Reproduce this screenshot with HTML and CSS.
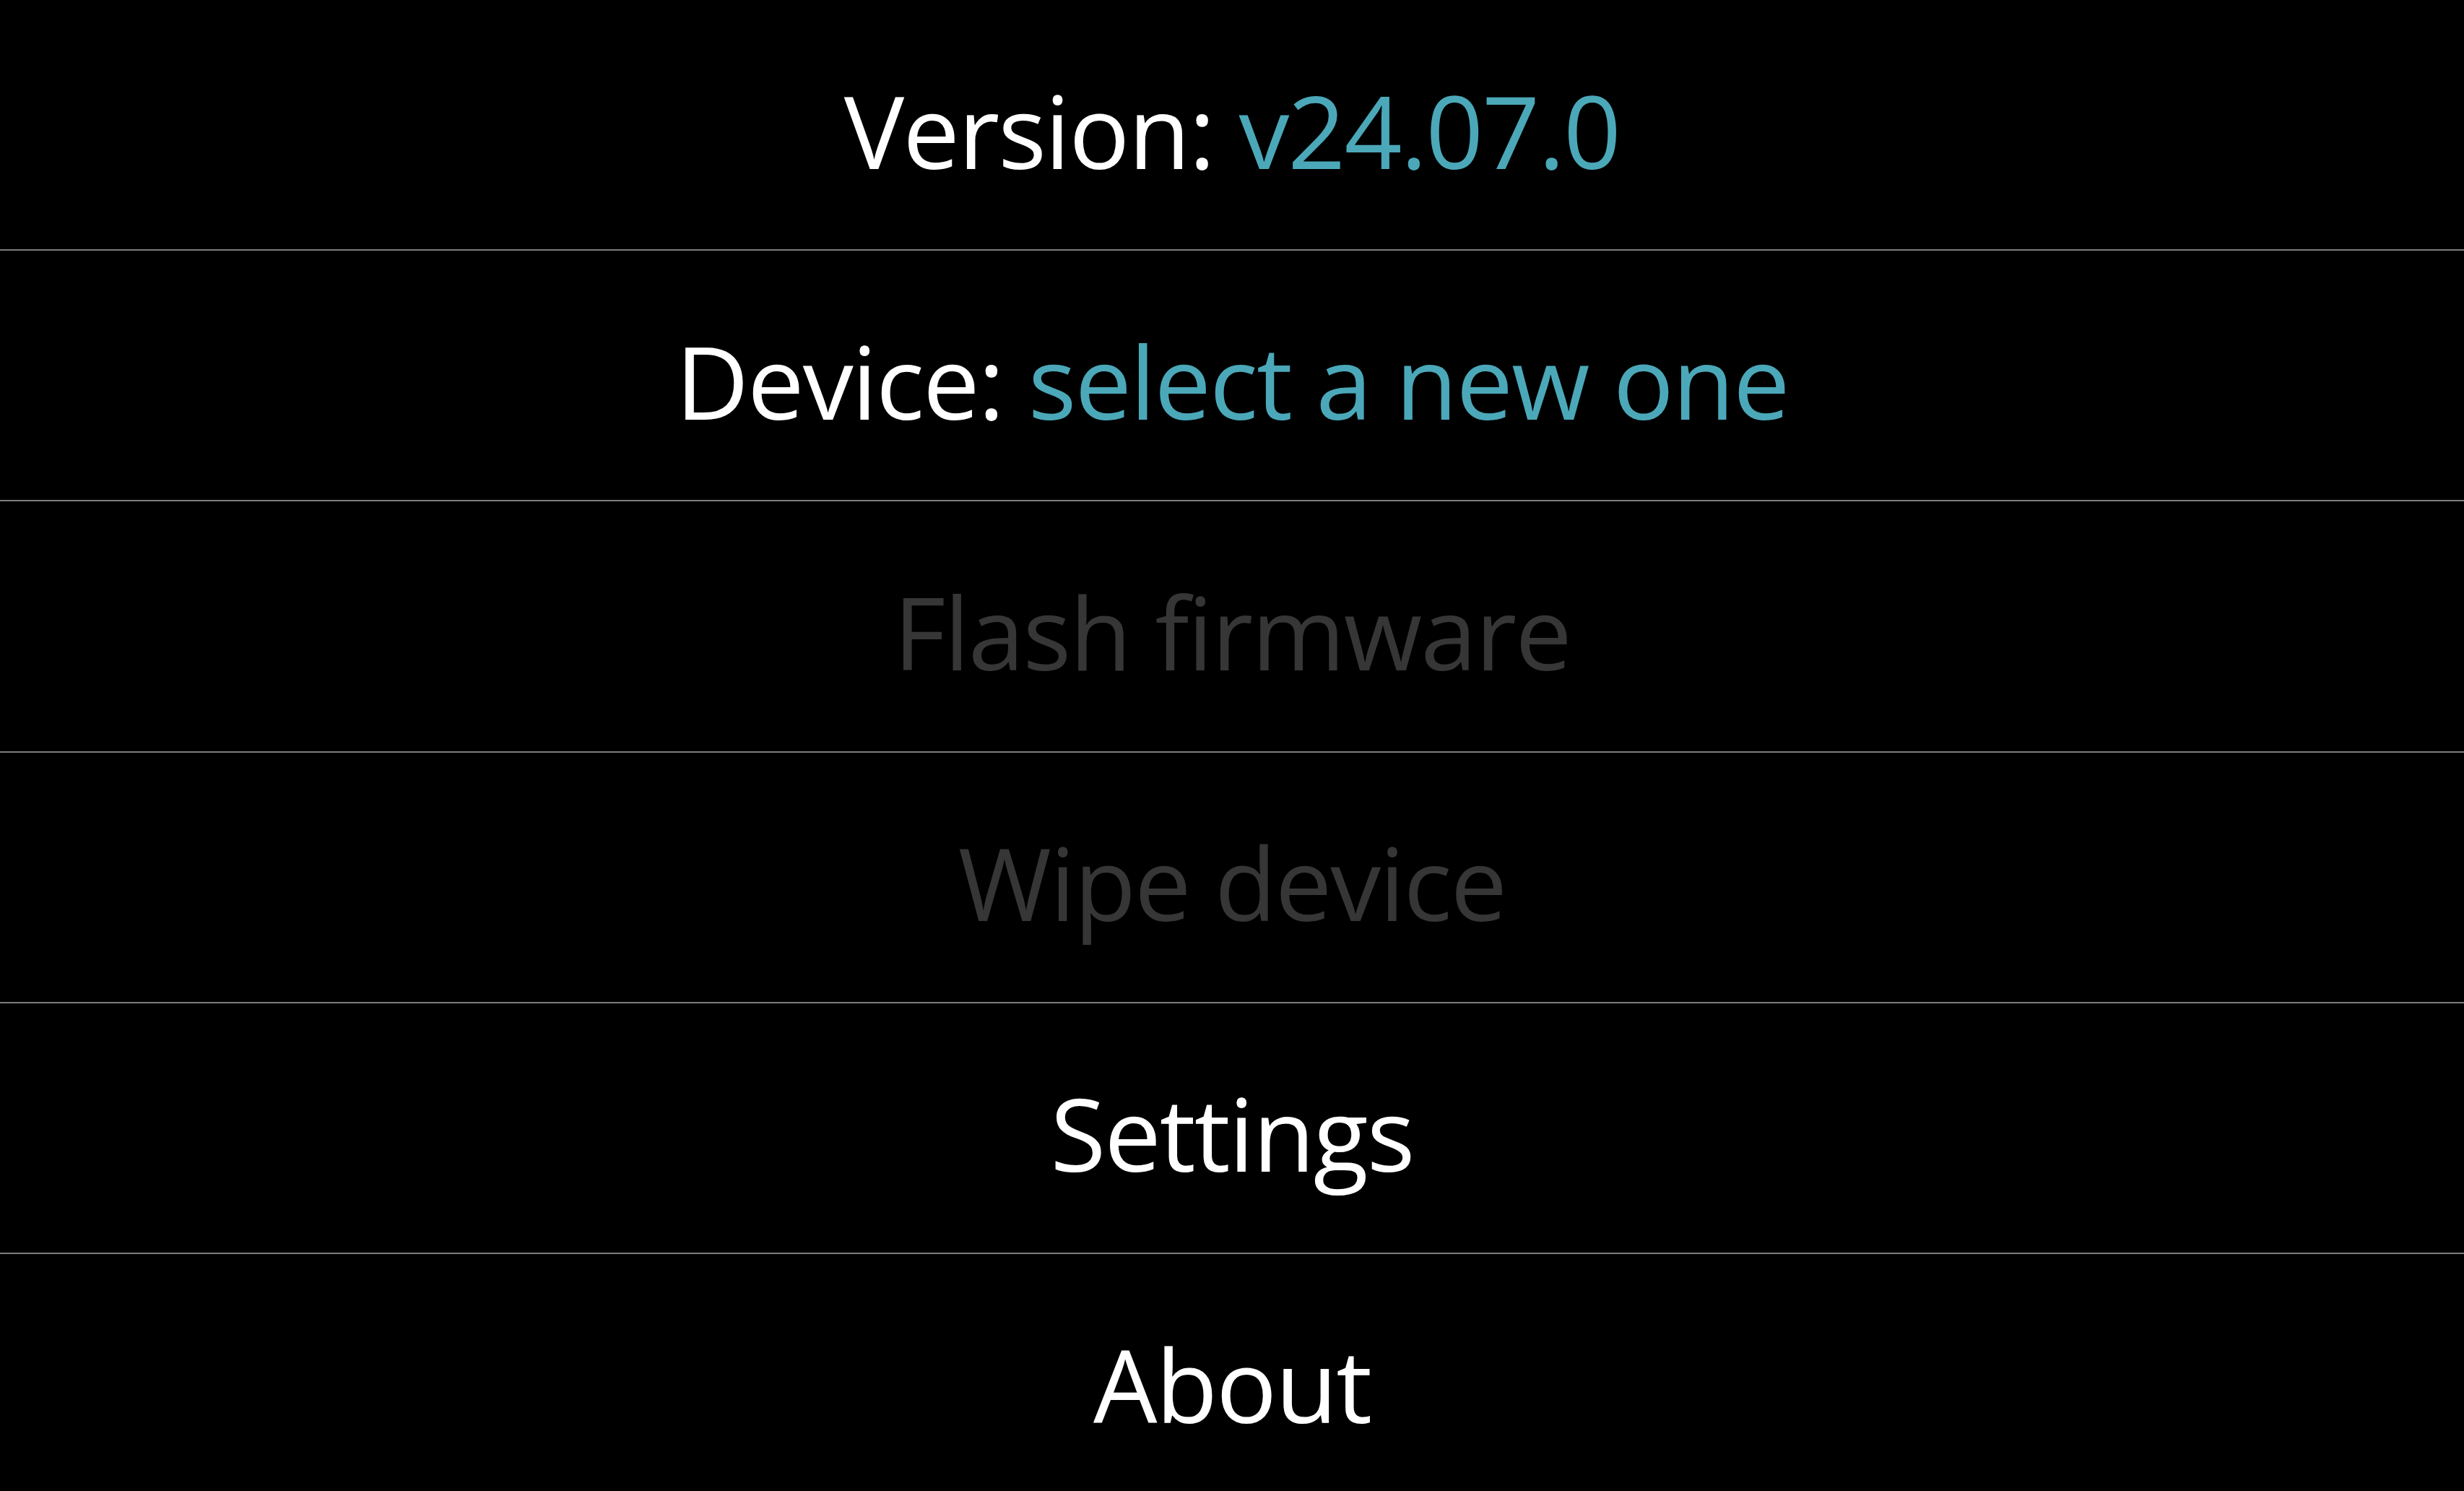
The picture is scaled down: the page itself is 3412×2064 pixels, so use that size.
FILE: index.html
```html
<!DOCTYPE html>
<html lang="en">
<head>
<meta charset="utf-8">
<title>Menu</title>
<link rel="stylesheet" href="styles.css">
</head>
<body>
<main class="menu">
  <div class="row"><span class="label">Version: <span class="accent">v24.07.0</span></span></div>
  <div class="row"><span class="label">Device: <span class="accent">select a new one</span></span></div>
  <div class="row disabled"><span class="label">Flash firmware</span></div>
  <div class="row disabled"><span class="label">Wipe device</span></div>
  <div class="row"><span class="label">Settings</span></div>
  <div class="row"><span class="label">About</span></div>
</main>
</body>
</html>
```

FILE: styles.css
```css
html, body {
  margin: 0;
  padding: 0;
  background: #000;
}

body {
  font-family: "Open Sans", "Noto Sans", sans-serif;
  color: #fff;
  overflow: hidden;
}

.menu {
  display: flex;
  flex-direction: column;
}

.row {
  flex: none;
  height: 347.2px;
  box-sizing: border-box;
  padding-top: 13px;
  border-bottom: 2px solid #7d7d7d;
  display: flex;
  align-items: center;
  justify-content: center;
  font-size: 140px;
  letter-spacing: -2px;
  white-space: nowrap;
}

.accent {
  color: #4ba8b9;
}

.disabled {
  color: #363636;
}
```
